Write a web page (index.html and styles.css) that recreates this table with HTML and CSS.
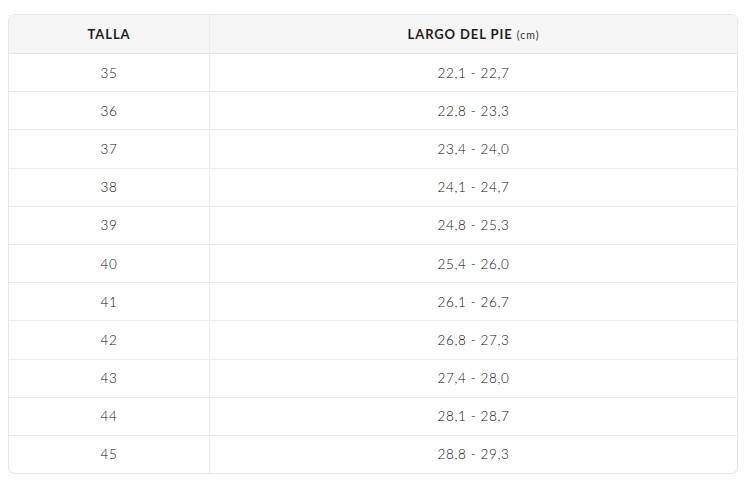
FILE: index.html
```html
<!DOCTYPE html>
<html lang="es">
<head>
<meta charset="utf-8">
<link rel="stylesheet" href="styles.css">
</head>
<body>
<div class="wrap">
<table class="sizes">
<thead>
<tr><th class="c1">TALLA</th><th class="c2">LARGO DEL PIE <span class="unit">(cm)</span></th></tr>
</thead>
<tbody>
<tr><td>35</td><td>22,1 - 22,7</td></tr>
<tr><td>36</td><td>22,8 - 23,3</td></tr>
<tr><td>37</td><td>23,4 - 24,0</td></tr>
<tr><td>38</td><td>24,1 - 24,7</td></tr>
<tr><td>39</td><td>24,8 - 25,3</td></tr>
<tr><td>40</td><td>25,4 - 26,0</td></tr>
<tr><td>41</td><td>26,1 - 26,7</td></tr>
<tr><td>42</td><td>26,8 - 27,3</td></tr>
<tr><td>43</td><td>27,4 - 28,0</td></tr>
<tr><td>44</td><td>28,1 - 28,7</td></tr>
<tr><td>45</td><td>28,8 - 29,3</td></tr>
</tbody>
</table>
</div>
</body>
</html>
```
FILE: styles.css
```css
html, body { margin: 0; padding: 0; background: #fff; }
body { font-family: "Lato", "Liberation Sans", sans-serif; color: #333; }
.wrap { padding: 14px 11px 0 8px; }
.sizes {
  width: 730px;
  border-collapse: separate;
  border-spacing: 0;
  border: 1px solid #e6e6e6;
  border-radius: 7px;
  overflow: hidden;
  box-shadow: 0 1px 2px rgba(0,0,0,0.04);
}
.sizes th, .sizes td {
  text-align: center;
  padding: 0;
  border-bottom: 1px solid #ebebeb;
}
.sizes th {
  height: 38px;
  background: #f5f5f5;
  font-weight: 700;
  font-size: 13px;
  color: #1e1e1e;
  letter-spacing: 0.9px;
  border-bottom: 1px solid #e6e6e6;
}
.sizes td {
  height: 37.2px;
  font-size: 13.5px;
  font-weight: 300;
  color: #111;
  letter-spacing: 0.6px;
}
.sizes tbody tr:last-child td { border-bottom: none; }
.sizes th.c1, .sizes td:first-child { width: 200px; border-right: 1px solid #ebebeb; }
.unit { font-size: 10.5px; font-weight: 400; color: #333; letter-spacing: 1px; }
```
